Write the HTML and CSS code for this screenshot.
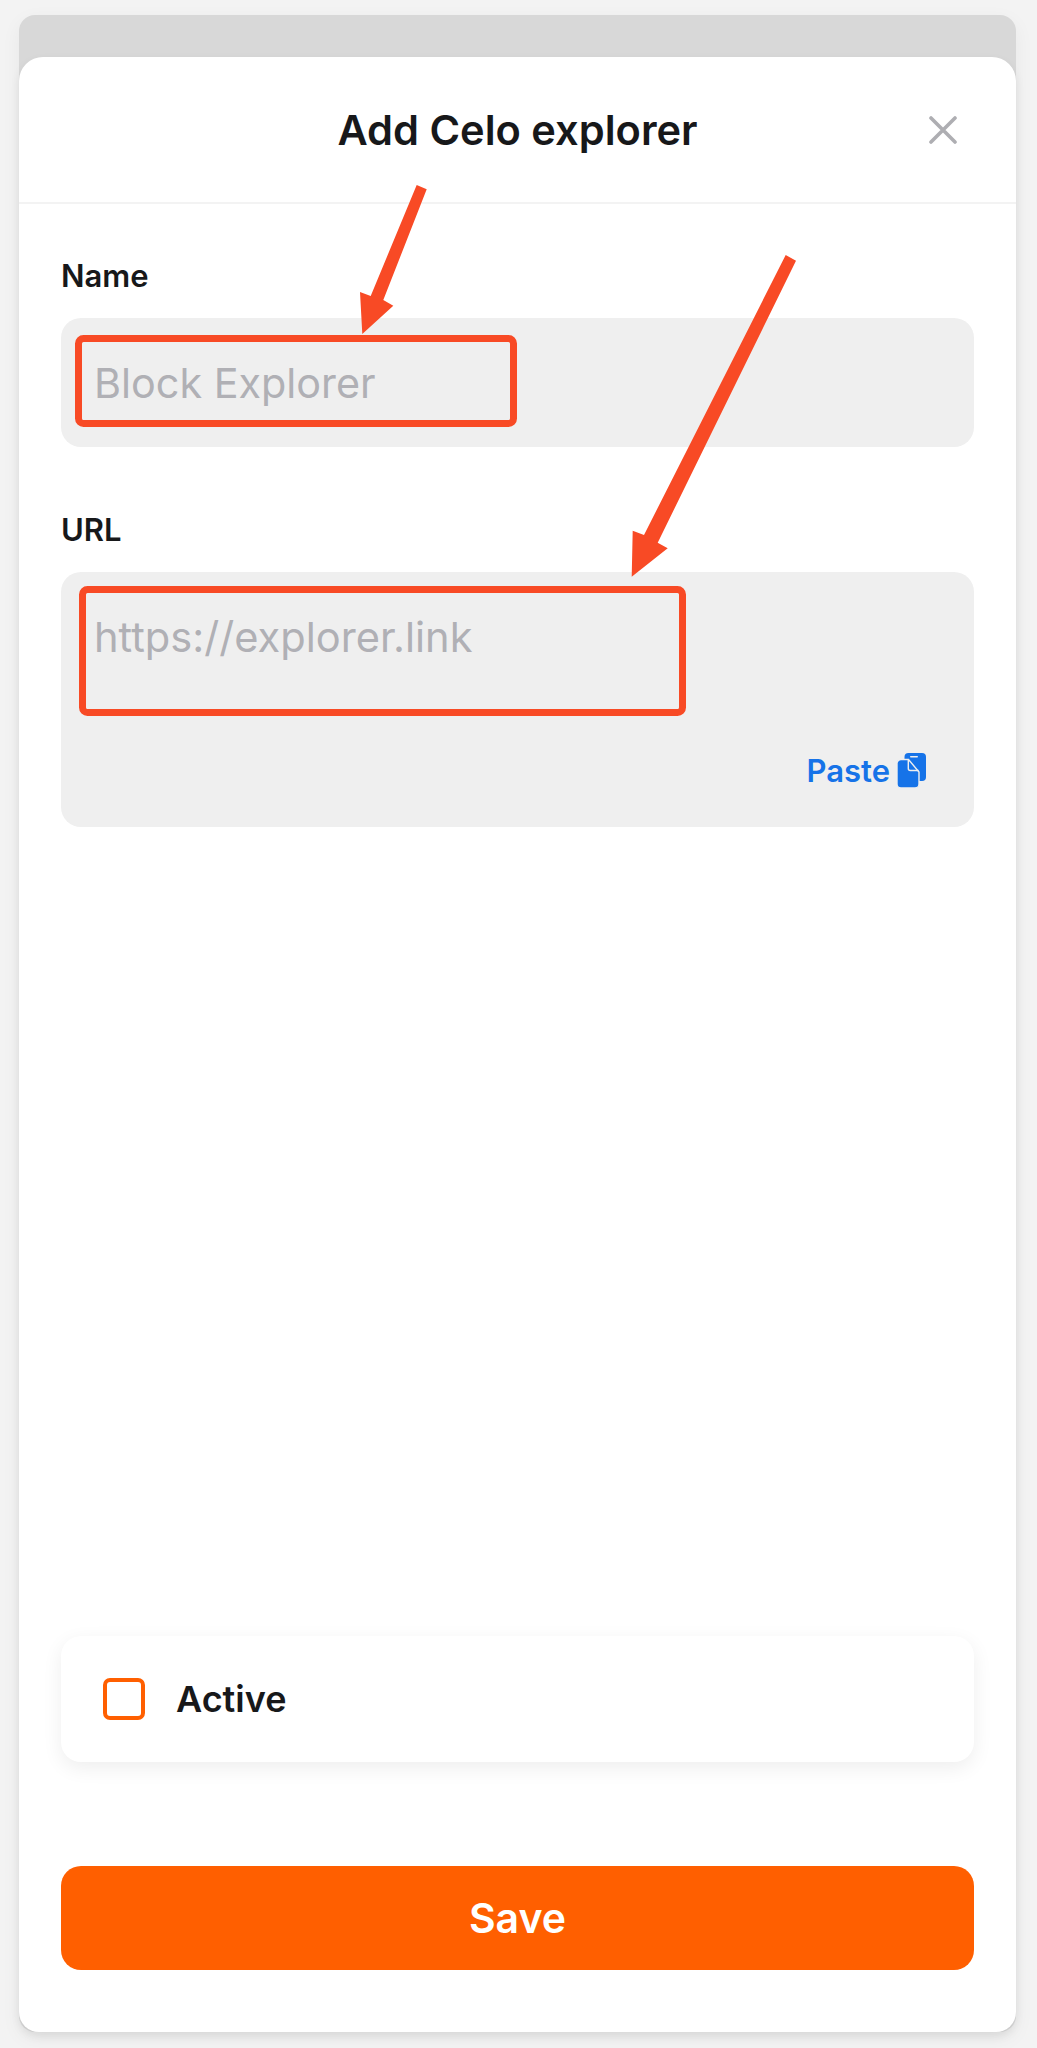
FILE: index.html
```html
<!DOCTYPE html>
<html lang="en">
<head>
  <meta charset="UTF-8" />
  <meta name="viewport" content="width=device-width, initial-scale=1.0"/>
  <title>Add Celo explorer</title>
  <link rel="stylesheet" href="styles.css">
</head>
<body>
  <div class="back-sheet">
    <main class="sheet">
      <!-- Header -->
      <header class="sheet-header">
        <h1>Add Celo explorer</h1>
        <button class="close-btn" aria-label="Close">
          <svg width="28" height="28" viewBox="0 0 28 28" fill="none" stroke="#aeaeb2" stroke-width="3.6" stroke-linecap="round">
            <path d="M2 2 L26 26 M26 2 L2 26"/>
          </svg>
        </button>
      </header>

      <!-- Form -->
      <div class="form">
        <label class="field-label" for="nameInput">Name</label>
        <input class="name-input" id="nameInput" type="text" placeholder="Block Explorer" />

        <label class="field-label url-label" for="urlInput">URL</label>
        <div class="url-box">
          <textarea class="url-input" id="urlInput" rows="1" placeholder="https://explorer.link"></textarea>
          <button class="paste-btn">
            Paste
            <svg width="29" height="35" viewBox="0 0 29 35">
              <rect x="7.5" y="0" width="21.5" height="28" rx="4" fill="#1673e8"/>
              <rect x="13" y="3" width="8" height="1.6" rx="0.8" fill="#efefef"/>
              <path d="M4 6.5 H11.5 L22 19 V31 a4 4 0 0 1 -4 4 H4 a4 4 0 0 1 -4 -4 V10.5 a4 4 0 0 1 4 -4z" fill="#1673e8" stroke="#efefef" stroke-width="1.4"/>
              <path d="M11.3 7 V15.5 a2 2 0 0 0 2 2 H21.5" fill="none" stroke="#efefef" stroke-width="1.4"/>
            </svg>
          </button>
        </div>
      </div>

      <!-- Footer -->
      <div class="bottom">
        <label class="active-card">
          <span class="check-box"></span>
          <span class="active-text">Active</span>
        </label>
        <button class="save-btn">Save</button>
      </div>
    </main>
  </div>

  <!-- Red annotations drawn over the screenshot -->
  <svg class="marks" width="1037" height="2048" viewBox="0 0 1037 2048" fill="none">
    <rect x="78.5" y="338.5" width="435" height="85" rx="5" stroke="#f84a25" stroke-width="7"/>
    <rect x="82.5" y="589.5" width="600" height="123" rx="5" stroke="#f84a25" stroke-width="7"/>
    <path d="M416.7 185 L426.7 189.3 L383.3 300 L393.3 305.7 L362.3 334 L360 292 L370.7 296z" fill="#f84a25"/>
    <path d="M785.7 255 L796 260.7 L657.7 542.7 L667.7 548.3 L631.7 576.7 L632.7 530.7 L644 535z" fill="#f84a25"/>
  </svg>
</body>
</html>
```

FILE: styles.css
```css
* {
  box-sizing: border-box;
}

body {
  margin: 0;
  height: 2048px;
  padding: 15px 21px 16px 19px;
  background-color: #f3f3f3;
  font-family: Inter, "Liberation Sans", sans-serif;
  color: #17181a;
  overflow: hidden;
}

.back-sheet {
  height: 2017px;
  padding-top: 42px;
  background-color: #d8d8d8;
  border-radius: 16px;
  box-shadow: 0 6px 20px rgba(0, 0, 0, 0.05);
}

.sheet {
  display: flex;
  flex-direction: column;
  height: 100%;
  background-color: #fff;
  border-radius: 24px 24px 20px 20px;
  box-shadow: 0 4px 10px rgba(0, 0, 0, 0.08);
}

.sheet-header {
  display: flex;
  align-items: center;
  justify-content: center;
  position: relative;
  flex-shrink: 0;
  height: 147px;
  padding-top: 2px;
  border-bottom: 2px solid #f3f3f3;
}

h1 {
  margin: 0;
  font-size: 41.6px;
  font-weight: 600;
  line-height: 1.2;
}

.close-btn {
  position: absolute;
  top: 59px;
  right: 59px;
  display: flex;
  padding: 0;
  border: none;
  background: none;
}

.form {
  display: flex;
  flex-direction: column;
  padding: 54px 42px 0;
}

.field-label {
  font-size: 31px;
  font-weight: 600;
  line-height: 36px;
}

.name-input {
  height: 129px;
  margin-top: 24px;
  padding: 0 0 0 33px;
  border: none;
  border-radius: 20px;
  background-color: #efefef;
  font-family: inherit;
  font-size: 41.3px;
  color: #17181a;
  outline: none;
}

.url-label {
  margin-top: 65px;
}

.url-box {
  display: flex;
  flex-direction: column;
  height: 255px;
  margin-top: 24px;
  padding: 40px 35px 0 33px;
  border-radius: 20px;
  background-color: #efefef;
}

.url-input {
  height: 60px;
  padding: 0;
  border: none;
  background: none;
  font-family: inherit;
  font-size: 41.6px;
  line-height: 50px;
  color: #17181a;
  resize: none;
  outline: none;
}

input::placeholder,
textarea::placeholder {
  color: #b0b0b5;
  opacity: 1;
}

.paste-btn {
  display: flex;
  align-items: center;
  align-self: flex-end;
  gap: 7px;
  margin-top: 80px;
  margin-right: 13px;
  padding: 0;
  border: none;
  background: none;
  font-family: inherit;
  font-size: 31px;
  font-weight: 600;
  color: #1673e8;
}

.bottom {
  display: flex;
  flex-direction: column;
  margin-top: auto;
  padding: 0 42px 62px;
}

.active-card {
  display: flex;
  align-items: center;
  gap: 31px;
  height: 126px;
  padding-left: 42px;
  padding-bottom: 1px;
  border-radius: 20px;
  background-color: #fff;
  box-shadow: 0 6px 20px rgba(0, 0, 0, 0.07);
}

.check-box {
  width: 42px;
  height: 42px;
  border: 4px solid #ff5f00;
  border-radius: 7px;
}

.active-text {
  font-size: 36px;
  font-weight: 600;
}

.save-btn {
  height: 104px;
  margin-top: 104px;
  border: none;
  border-radius: 20px;
  background-color: #ff5f00;
  font-family: inherit;
  font-size: 41px;
  font-weight: 600;
  color: #fff;
}

.marks {
  position: absolute;
  top: 0;
  left: 0;
  pointer-events: none;
}
```
